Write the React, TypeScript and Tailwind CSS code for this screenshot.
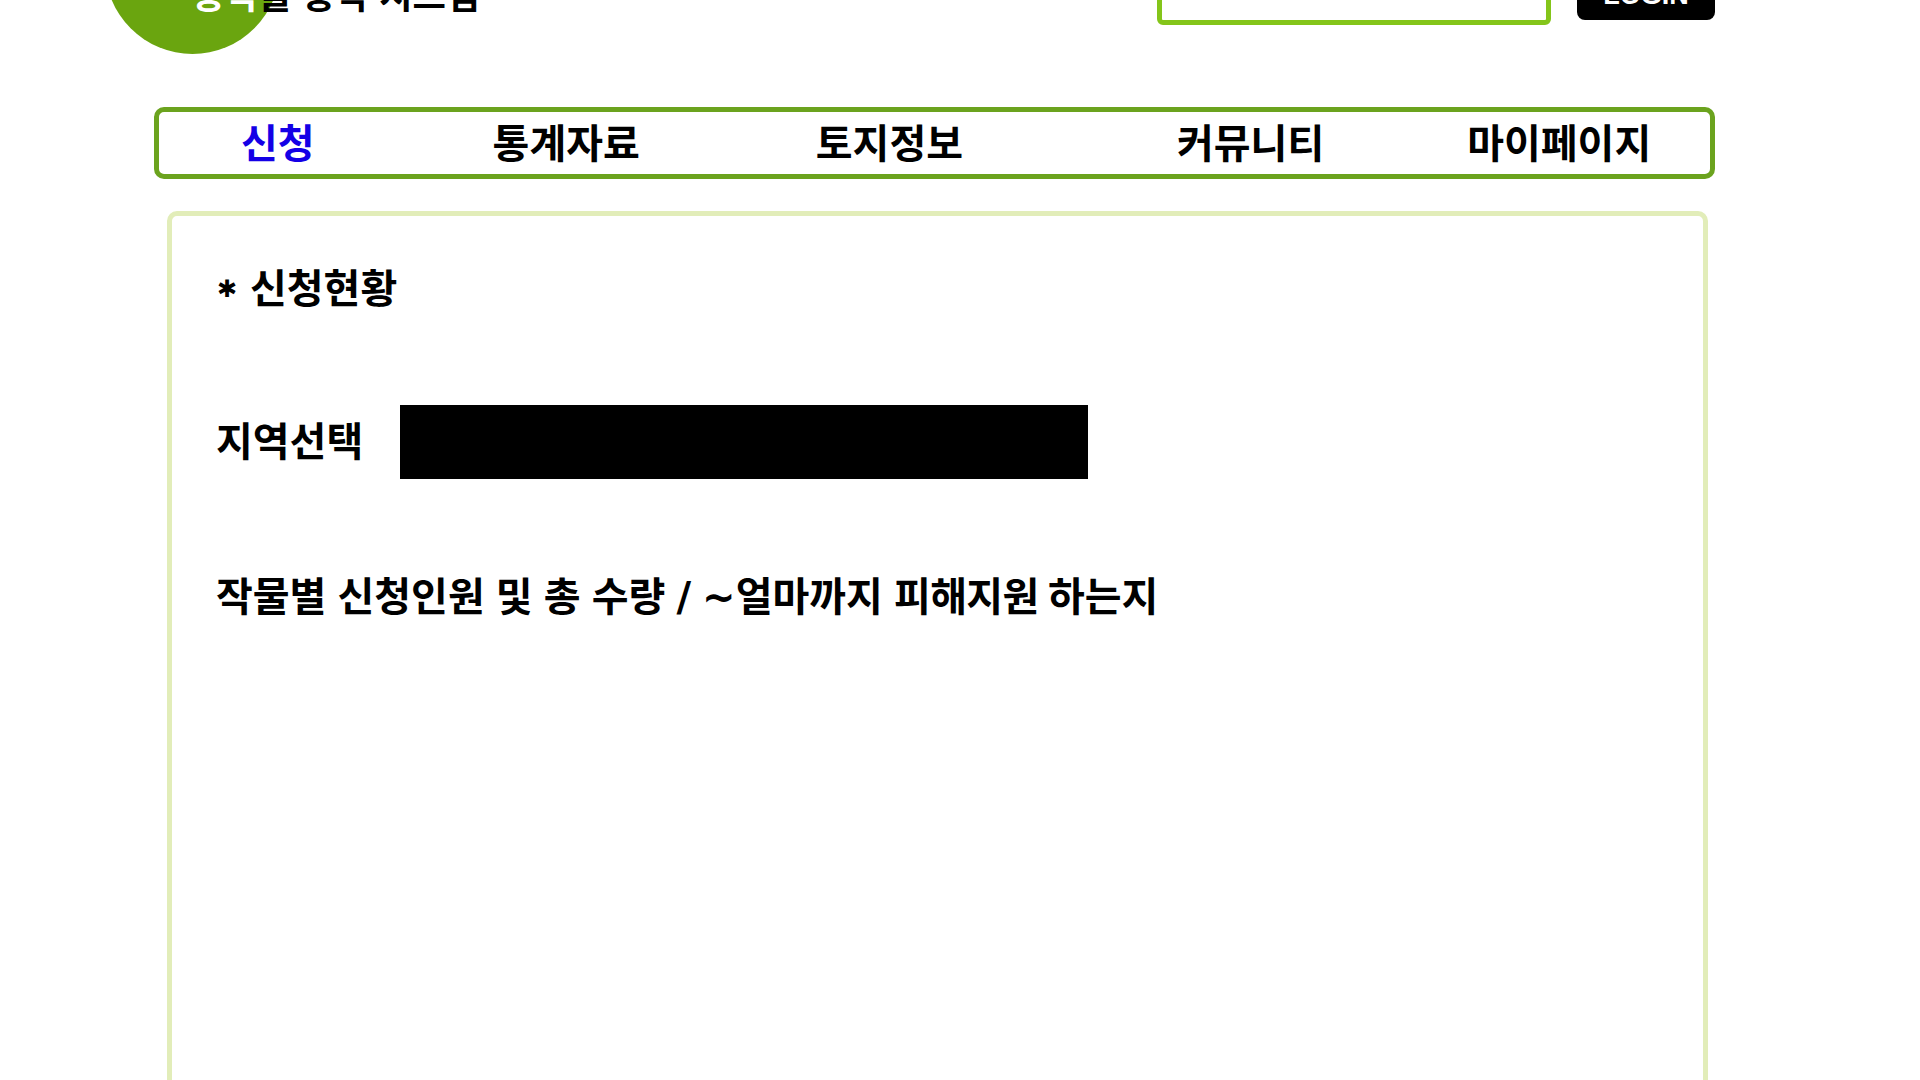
import React from "react";

const font = { fontFamily: '"Liberation Sans", "Noto Sans CJK KR", sans-serif' };
const dejavu = { fontFamily: '"DejaVu Sans", sans-serif' };

const navItems = [
  { label: "신청", cls: "ml-[82px] text-[#1400e6]" },
  { label: "통계자료", cls: "ml-[178px] text-black" },
  { label: "토지정보", cls: "ml-[176px] text-black" },
  { label: "커뮤니티", cls: "ml-[214px] text-black" },
  { label: "마이페이지", cls: "ml-[143px] text-black" },
];

export default function App() {
  return (
    <div className="h-screen overflow-hidden bg-white font-bold text-black" style={font}>
      <header className="relative -mt-[121px] flex h-[175px] items-end">
        <div className="ml-[105px] h-[175px] w-[175px] rounded-full bg-[#6aa50f]" />
        <div className="absolute bottom-[30px] left-[192px] whitespace-nowrap text-[36.3px] leading-[54px]">
          <span className="text-white">농작</span>물 농작 시스템
        </div>
        <div className="mb-[29px] ml-[877px] h-[60px] w-[394px] rounded-[6px] border-[5px] border-[#84c51a]" />
        <div className="mb-[34px] ml-[26px] flex h-[60px] w-[138px] items-center justify-center rounded-[8px] bg-black pt-[10px] text-[27px] text-white">
          LOGIN
        </div>
      </header>

      <nav className="ml-[154px] mt-[53px] flex h-[72px] w-[1561px] items-center whitespace-nowrap rounded-[10px] border-[5px] border-[#6ba31e] pt-[2px] text-[40px] leading-none">
        {navItems.map((n) => (
          <span key={n.label} className={n.cls}>
            {n.label}
          </span>
        ))}
      </nav>

      <main className="ml-[167px] mt-[32px] h-[1000px] w-[1541px] rounded-[10px] border-[5px] border-[#e2edb9] px-[44px] pt-[43px]">
        <h2 className="flex h-[60px] items-center text-[40px] leading-[60px]">
          <span className="flex w-[34px] pl-[1px] text-[24px] leading-none" style={dejavu}>
            ✱
          </span>
          신청현황
        </h2>
        <div className="mt-[86px] flex items-center gap-[37px]">
          <span className="text-[40px] leading-[60px]">지역선택</span>
          <div className="h-[74px] w-[688px] bg-black" />
        </div>
        <p className="mt-[88px] h-[60px] text-[40px] leading-[60px]">
          작물별 신청인원 및 총 수량 <span style={dejavu}>/</span> <span style={dejavu}>~</span>얼마까지 <span className="tracking-[-0.6px]">피해지원</span> <span className="-ml-[2px]">하는지</span>
        </p>
      </main>
    </div>
  );
}
